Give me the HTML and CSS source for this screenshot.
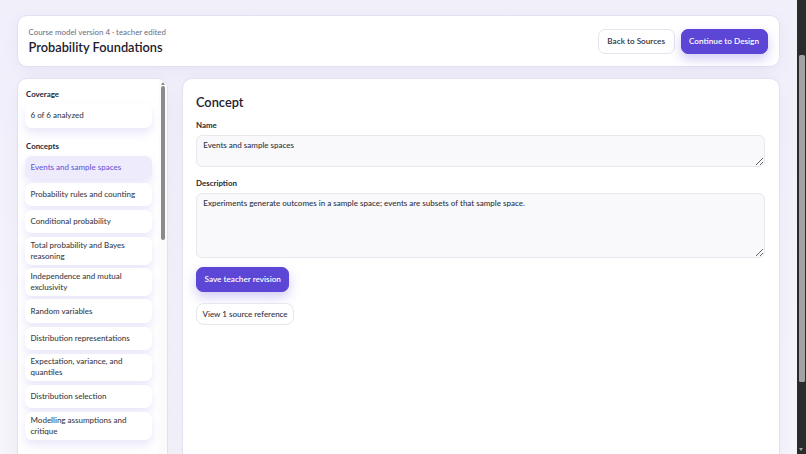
FILE: index.html
```html
<!DOCTYPE html>
<html lang="en">
<head>
<meta charset="utf-8">
<title>Probability Foundations</title>
<link rel="stylesheet" href="styles.css">
</head>
<body>
<div class="page">
  <header class="topbar card">
    <div class="titles">
      <div class="eyebrow">Course model version 4 · teacher edited</div>
      <h1 class="title">Probability Foundations</h1>
    </div>
    <div class="actions">
      <button class="btn btn-outline">Back to Sources</button>
      <button class="btn btn-primary">Continue to Design</button>
    </div>
  </header>

  <div class="workspace">
    <aside class="sidebar card">
      <div class="sidebar-scroll">
        <section class="group">
          <h3 class="group-title">Coverage</h3>
          <div class="item">6 of 6 analyzed</div>
        </section>
        <section class="group">
          <h3 class="group-title">Concepts</h3>
          <ul class="concepts">
            <li><button class="item concept active">Events and sample spaces</button></li>
            <li><button class="item concept">Probability rules and counting</button></li>
            <li><button class="item concept">Conditional probability</button></li>
            <li><button class="item concept">Total probability and Bayes reasoning</button></li>
            <li><button class="item concept">Independence and mutual exclusivity</button></li>
            <li><button class="item concept">Random variables</button></li>
            <li><button class="item concept">Distribution representations</button></li>
            <li><button class="item concept">Expectation, variance, and quantiles</button></li>
            <li><button class="item concept">Distribution selection</button></li>
            <li><button class="item concept">Modelling assumptions and critique</button></li>
          </ul>
        </section>
      </div>
      <div class="rail" aria-hidden="true">
        <span class="rail-arrow"></span>
        <span class="rail-thumb"></span>
      </div>
    </aside>

    <main class="editor card">
      <h2 class="editor-title">Concept</h2>
      <label class="field">
        <span class="field-label">Name</span>
        <textarea class="input input-name">Events and sample spaces</textarea>
      </label>
      <label class="field">
        <span class="field-label">Description</span>
        <textarea class="input input-desc">Experiments generate outcomes in a sample space; events are subsets of that sample space.</textarea>
      </label>
      <div class="editor-actions">
        <button class="btn btn-primary btn-save">Save teacher revision</button>
        <button class="btn btn-ghost">View 1 source reference</button>
      </div>
    </main>
  </div>
</div>

<div class="page-scrollbar" aria-hidden="true">
  <span class="page-thumb"></span>
  <span class="page-arrow-down"></span>
</div>
</body>
</html>
```

FILE: styles.css
```css
* { box-sizing: border-box; }

html {
  background: linear-gradient(180deg, #f0effa 0%, #f4f3fb 45%, #f6f6fb 100%);
}

body {
  margin: 0;
  font-family: "Lato", "Liberation Sans", sans-serif;
  font-size: 8px;
  line-height: 11px;
  font-weight: 500;
  color: #2b2e3b;
}

.page {
  padding: 14.5px 26.5px 14px 16.5px;
}

.card {
  background: #ffffff;
  border: 1px solid #e2e0f2;
  border-radius: 10px;
  box-shadow: 0 6px 18px rgba(86, 72, 170, 0.06);
}

/* header */
.topbar {
  display: flex;
  align-items: center;
  justify-content: space-between;
  padding: 11.3px 11px 10.4px 11px;
}

.eyebrow {
  font-size: 7.9px;
  line-height: 11px;
  font-weight: 400;
  color: #6a6e7e;
}

.title {
  margin: 1.5px 0 0;
  font-size: 12.8px;
  line-height: 16px;
  font-weight: 600;
  color: #1d202c;
}

.actions {
  display: flex;
  gap: 6px;
}

.btn {
  font-family: inherit;
  font-size: 8.2px;
  line-height: 11px;
  font-weight: 600;
  border-radius: 7px;
  cursor: pointer;
  white-space: nowrap;
}

.btn-outline {
  height: 25px;
  padding: 0 8.5px;
  background: #ffffff;
  border: 1px solid #e4e4ee;
  color: #2f3242;
}

.btn-primary {
  height: 25px;
  padding: 0 7.5px;
  background: #5b46d6;
  border: 1px solid #5b46d6;
  color: #ffffff;
  box-shadow: 0 5px 12px rgba(91, 70, 214, 0.28);
}

.btn-ghost {
  height: 21.5px;
  padding: 0 5.5px;
  background: #ffffff;
  border: 1px solid #e6e6ee;
  color: #2f3242;
  font-size: 8px;
  font-weight: 500;
  border-radius: 8px;
}

/* workspace */
.workspace {
  display: grid;
  grid-template-columns: 151.5px 1fr;
  gap: 14px;
  height: 520px;
  margin-top: 11.6px;
}

.sidebar {
  display: grid;
  grid-template-columns: 1fr 8px;
  column-gap: 7px;
  padding-left: 7px;
  overflow: hidden;
}

.sidebar-scroll {
  padding: 9.5px 0 9px;
}

.rail {
  display: flex;
  flex-direction: column;
  align-items: center;
  background: #fbfbfc;
}

.rail-arrow {
  width: 0;
  height: 0;
  margin-top: 2.5px;
  border-left: 2.5px solid transparent;
  border-right: 2.5px solid transparent;
  border-bottom: 3.5px solid #8c8c8c;
}

.rail-thumb {
  width: 4.5px;
  height: 153.5px;
  margin-top: 1.5px;
  border-radius: 2.5px;
  background: #8b8b8b;
}

.group + .group { margin-top: 13px; }

.group-title {
  margin: 0 0 5.3px;
  padding-left: 1.5px;
  font-size: 7.9px;
  line-height: 10px;
  font-weight: 700;
  color: #262935;
}

.concepts {
  list-style: none;
  margin: 0;
  padding: 0;
  display: flex;
  flex-direction: column;
  gap: 3.55px;
}

.item {
  display: flex;
  align-items: center;
  width: 100%;
  min-height: 23.5px;
  padding: 2.85px 6px;
  background: #ffffff;
  border: 0;
  border-radius: 7px;
  box-shadow: 0 5px 10px rgba(104, 84, 222, 0.14);
  font-family: inherit;
  font-size: 8px;
  line-height: 11px;
  font-weight: 500;
  color: #3a3d4a;
  text-align: left;
}

.concept { cursor: pointer; }

.concept.active {
  background: #eeebfc;
  color: #6c58d8;
}

/* editor */
.editor {
  padding: 14.4px 13.5px 14px 13px;
}

.editor-title {
  margin: 0;
  font-size: 12.8px;
  line-height: 16px;
  font-weight: 600;
  color: #1d202c;
}

.field {
  display: flex;
  flex-direction: column;
  gap: 5.2px;
  margin-top: 10.3px;
}

.field + .field { margin-top: 10.2px; }

.field-label {
  font-size: 7.9px;
  line-height: 10px;
  font-weight: 700;
  color: #262935;
}

.input {
  display: block;
  width: 100%;
  padding: 4px 6.3px;
  border: 1px solid #e7e7ee;
  border-radius: 6px;
  background: #f9f9fb;
  font-family: inherit;
  font-size: 8px;
  line-height: 11px;
  font-weight: 500;
  color: #2f3242;
  resize: vertical;
}

.input-name { height: 32.3px; }
.input-desc { height: 65.5px; }

.editor-actions {
  display: flex;
  flex-direction: column;
  align-items: flex-start;
  gap: 11px;
  margin-top: 9px;
}

/* browser scrollbar strip */
.page-scrollbar {
  position: fixed;
  top: 0;
  right: 0;
  bottom: 0;
  width: 9px;
  background: #2b2b2b;
}

.page-thumb {
  position: absolute;
  top: 55px;
  left: 2px;
  width: 5.5px;
  height: 327px;
  border-radius: 1.5px;
  background: #a2a2a2;
}

.page-arrow-down {
  position: absolute;
  bottom: 3px;
  left: 2px;
  width: 0;
  height: 0;
  border-left: 2.5px solid transparent;
  border-right: 2.5px solid transparent;
  border-top: 3.5px solid #a2a2a2;
}
```
